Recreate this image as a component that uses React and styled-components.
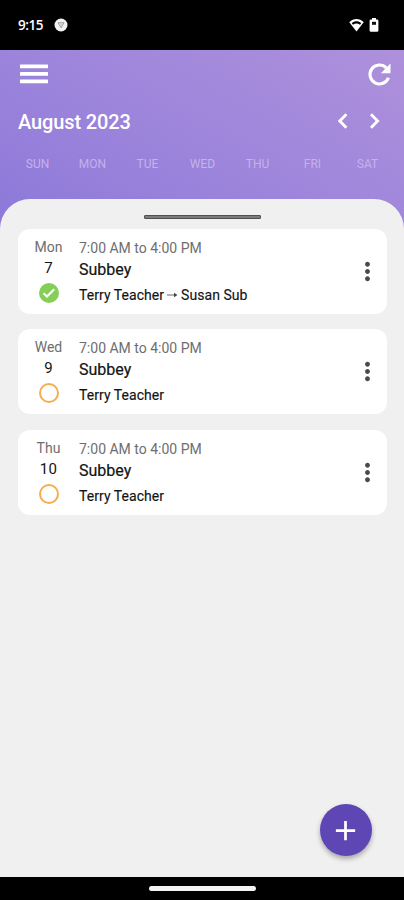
import React from 'react'
import styled, { createGlobalStyle } from 'styled-components'
import { MdAdd, MdMoreVert } from 'react-icons/md'

const GlobalStyle = createGlobalStyle`
  * {
    box-sizing: border-box;
  }

  body {
    margin: 0;
    background: #000;
    font-family: Roboto, 'Liberation Sans', sans-serif;
  }

  button {
    display: flex;
    align-items: center;
    justify-content: center;
    padding: 0;
    border: 0;
    background: none;
    color: inherit;
  }

  svg {
    display: block;
    flex: none;
  }
`

const Screen = styled.div`
  position: relative;
  display: flex;
  flex-direction: column;
  width: 404px;
  height: 900px;
  overflow: hidden;
`

const StatusBar = styled.div`
  display: flex;
  justify-content: space-between;
  height: 50px;
  padding: 16px 25px 0 18px;
  background: #000;
  color: #fff;
`

const StatusGroup = styled.div`
  display: flex;
  align-items: center;
  gap: ${props => props.gap};
  height: 18px;
`

const Clock = styled.span`
  width: 25px;
  margin-top: -1px;
  font-family: 'Open Sans', Roboto, sans-serif;
  font-size: 13.5px;
  font-weight: 600;
  letter-spacing: -0.5px;
  white-space: nowrap;
`

const Content = styled.main`
  display: flex;
  flex: 1;
  flex-direction: column;
  background: linear-gradient(30deg, #8b78d9 0%, #9982db 35%, #a389db 65%, #ae90dc 100%) no-repeat;
  background-size: 100% 180px;
`

const Header = styled.header`
  height: 149px;
  color: #fff;
`

const Toolbar = styled.div`
  display: flex;
  align-items: center;
  justify-content: space-between;
  height: 48px;
  padding: 0 8px 0 20px;
`

const MonthRow = styled.div`
  display: flex;
  align-items: center;
  justify-content: space-between;
  height: 48px;
  padding: 0 24px 0 18px;
`

const Month = styled.h1`
  margin: 0;
  font-size: 20px;
  font-weight: 500;
  line-height: 24px;
  letter-spacing: -0.12px;
`

const Arrows = styled.div`
  display: flex;
  gap: 22px;
  margin-top: -2px;
`

const Weekdays = styled.div`
  display: grid;
  grid-template-columns: repeat(7, 55px);
  margin: 10px 0 0 10px;
  color: #c4b2ea;
  font-size: 12px;
  line-height: 16px;
  text-align: center;
`

const Sheet = styled.section`
  flex: 1;
  padding: 16px 17px 0 18px;
  border-radius: 30px 30px 0 0;
  background: #f0f0f0;
`

const Handle = styled.div`
  width: 117px;
  height: 4px;
  margin: 0 auto 10px;
  border: 1px solid #505050;
  border-radius: 1px;
  background: #7c7c7c;
`

const Card = styled.article`
  display: grid;
  grid-template-columns: 61px 1fr 39px;
  height: 85px;
  margin-bottom: 15.3px;
  border-radius: 12px;
  background: #fff;
  color: #141414;
`

const DateColumn = styled.div`
  display: flex;
  flex-direction: column;
  align-items: center;
  padding-top: 10px;
`

const DayName = styled.span`
  color: #6e6e6e;
  font-size: 14px;
  line-height: 17px;
`

const DayNumber = styled.span`
  margin-top: 2px;
  font-size: 15px;
  line-height: 20px;
  letter-spacing: 0.3px;
`

const Status = styled.div`
  display: flex;
  align-items: center;
  justify-content: center;
  width: 20px;
  height: 20px;
  margin-top: 5px;
  border: ${props => (props.filled ? 'none' : '2px solid #f5ad50')};
  border-radius: 50%;
  background: ${props => (props.filled ? '#86cf56' : 'none')};
`

const Details = styled.div`
  padding-top: 10px;
  white-space: nowrap;
`

const Time = styled.div`
  color: #6e6e6e;
  font-size: 14px;
  line-height: 18px;
`

const Title = styled.div`
  margin-top: 3px;
  font-size: 16px;
  line-height: 20px;
  -webkit-text-stroke: 0.2px #141414;
`

const People = styled.div`
  display: flex;
  align-items: center;
  gap: 3px;
  margin-top: 6px;
  font-size: 14px;
  line-height: 18px;
  letter-spacing: 0.05px;
  -webkit-text-stroke: 0.15px #141414;
`

const More = styled.button`
  && {
    color: #4a4a4a;
  }
`

const AddButton = styled.button`
  && {
    position: absolute;
    right: 32.5px;
    bottom: 44px;
    width: 52px;
    height: 52px;
    border-radius: 50%;
    background: #5e47b5;
    box-shadow: 0 3px 5px rgba(0, 0, 0, 0.3);
    color: #fff;
  }
`

const NavBar = styled.div`
  display: flex;
  justify-content: center;
  height: 23px;
  padding-top: 9px;
  background: #000;
`

const HomePill = styled.div`
  width: 107px;
  height: 5px;
  border-radius: 3px;
  background: #f4f4f4;
`

const weekdays = ['SUN', 'MON', 'TUE', 'WED', 'THU', 'FRI', 'SAT']

const jobs = [
  { day: 'Mon', date: 7, teacher: 'Terry Teacher', substitute: 'Susan Sub' },
  { day: 'Wed', date: 9, teacher: 'Terry Teacher' },
  { day: 'Thu', date: 10, teacher: 'Terry Teacher' }
]

const Chevron = ({ d }) => (
  <svg width="10" height="16" viewBox="0 0 10 16" fill="none" stroke="#fff" strokeWidth="2.8">
    <path d={d} />
  </svg>
)

const JobCard = ({ day, date, teacher, substitute }) => (
  <Card>
    <DateColumn>
      <DayName>{day}</DayName>
      <DayNumber>{date}</DayNumber>
      <Status filled={substitute ? 1 : 0}>
        {substitute && (
          <svg width="14" height="12" viewBox="0 0 14 12" fill="none" stroke="#fff" strokeWidth="2.1">
            <path d="M1.5 6.2 L5 9.6 L12.2 2.2" />
          </svg>
        )}
      </Status>
    </DateColumn>
    <Details>
      <Time>7:00 AM to 4:00 PM</Time>
      <Title>Subbey</Title>
      <People>
        <span>{teacher}</span>
        {substitute && (
          <>
            <svg width="11" height="6" viewBox="0 0 11 6">
              <path d="M0 3 H8" stroke="#666" />
              <path d="M7 0.8 L10.5 3 L7 5.2 Z" fill="#444" />
            </svg>
            <span>{substitute}</span>
          </>
        )}
      </People>
    </Details>
    <More aria-label="More">
      <MdMoreVert size={29} />
    </More>
  </Card>
)

export default () => {
  return (
    <>
      <GlobalStyle />
      <Screen>
        <StatusBar>
          <StatusGroup gap="10.5px">
            <Clock>9:15</Clock>
            <svg width="14" height="14" viewBox="0 0 14 14">
              <circle cx="7" cy="7" r="6.5" fill="#f2f2f2" />
              <path d="M4 4.8 H10 L7.2 9.8 Z" fill="none" stroke="#999" strokeWidth="1" />
              <circle cx="7" cy="6.5" r="1.6" fill="#ccc" />
            </svg>
          </StatusGroup>
          <StatusGroup gap="5px">
            <svg width="15" height="14" viewBox="0 0 15 14">
              <path d="M0.3 4.2 C4.5 0 10.5 0 14.7 4.2 L7.5 13.4 Z" fill="#fff" />
              <path d="M2.8 5.2 C5.6 2.7 9.4 2.7 12.2 5.2 L11 6.7 C8.8 5 6.2 5 4 6.7 Z" fill="#000" />
            </svg>
            <svg width="10" height="14" viewBox="0 0 10 14">
              <path d="M3 0 H7 V1.4 H8 Q9.4 1.4 9.4 2.8 V12.4 Q9.4 13.8 8 13.8 H2 Q0.6 13.8 0.6 12.4 V2.8 Q0.6 1.4 2 1.4 H3 Z" fill="#fff" />
              <path d="M3 3.8 H7 V6.8 H3 Z" fill="#111" />
            </svg>
          </StatusGroup>
        </StatusBar>
        <Content>
          <Header>
            <Toolbar>
              <button aria-label="Menu">
                <svg width="28" height="20" viewBox="0 0 28 20" fill="#fff">
                  <rect y="0.5" width="28" height="3.7" rx="0.5" />
                  <rect y="8.1" width="28" height="3.7" rx="0.5" />
                  <rect y="15.6" width="28" height="3.7" rx="0.5" />
                </svg>
              </button>
              <button aria-label="Refresh">
                <svg width="33" height="33" viewBox="0 0 24 24">
                  <path d="M16.9 7.1 A6.9 6.9 0 1 0 18.5 14.3" fill="none" stroke="#fff" strokeWidth="2.3" />
                  <path d="M20 4 V11 H13 Z" fill="#fff" />
                </svg>
              </button>
            </Toolbar>
            <MonthRow>
              <Month>August 2023</Month>
              <Arrows>
                <button aria-label="Previous month">
                  <Chevron d="M8.4 1.2 L1.8 8 L8.4 14.8" />
                </button>
                <button aria-label="Next month">
                  <Chevron d="M1 1.2 L7.6 8 L1 14.8" />
                </button>
              </Arrows>
            </MonthRow>
            <Weekdays>
              {weekdays.map(name => (
                <span key={name}>{name}</span>
              ))}
            </Weekdays>
          </Header>
          <Sheet>
            <Handle />
            {jobs.map(job => (
              <JobCard key={job.date} {...job} />
            ))}
          </Sheet>
        </Content>
        <NavBar>
          <HomePill />
        </NavBar>
        <AddButton aria-label="Add">
          <MdAdd size={33} />
        </AddButton>
      </Screen>
    </>
  )
}
